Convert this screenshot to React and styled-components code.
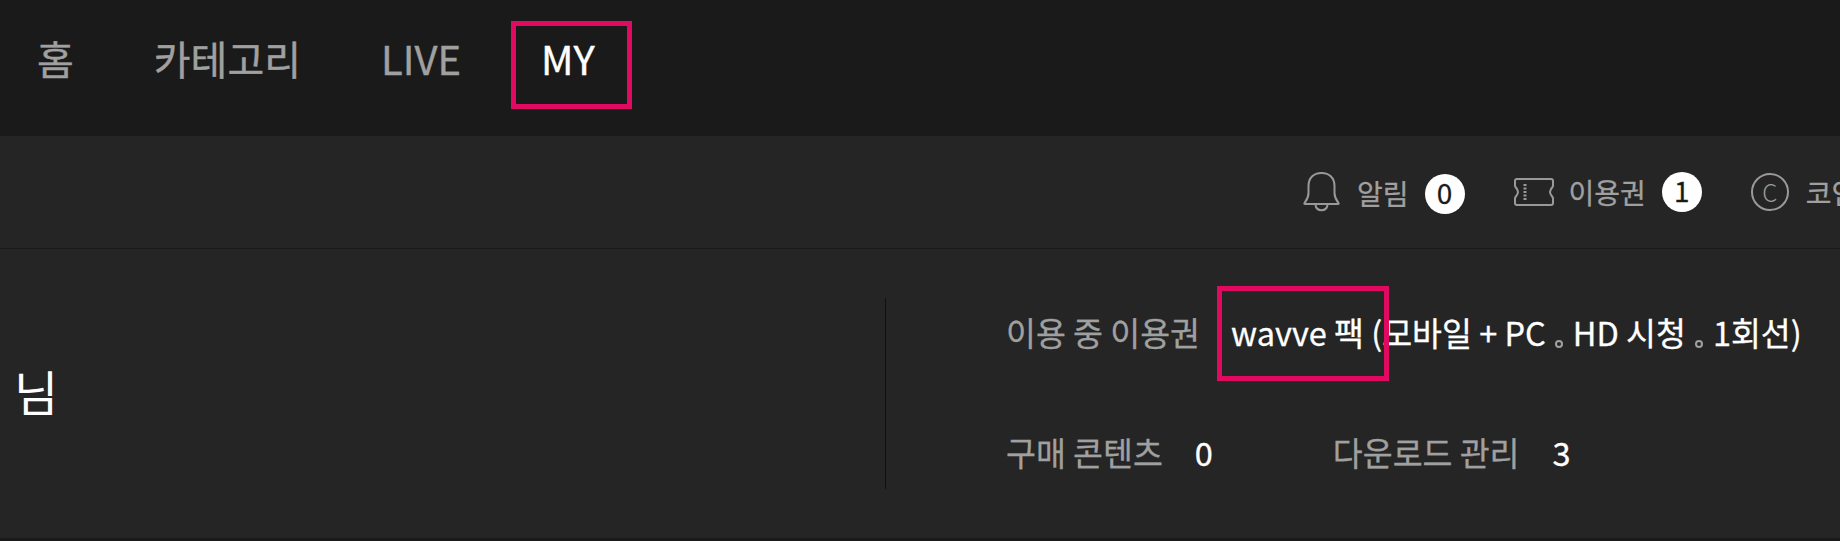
import React from 'react';
import styled, { createGlobalStyle } from 'styled-components';

const Global = createGlobalStyle`
    html, body { margin: 0; padding: 0; background: #252525; }
    body { font-family: "Noto Sans CJK KR", "Noto Sans", sans-serif; overflow: hidden; }
`;

const Page = styled.div`
    width: 1840px;
    height: 541px;
    overflow: hidden;
    display: flex;
    flex-direction: column;
    background: #252525;
`;

const Gnb = styled.nav`
    height: 136px;
    flex: none;
    background: #1a1a1a;
    display: flex;
    align-items: flex-start;
    padding: 26px 0 0 37px;
    box-sizing: border-box;
`;

const GnbItem = styled.a`
    position: relative;
    margin-right: 80px;
    font-size: 40px;
    line-height: 64px;
    -webkit-text-stroke: 0.4px currentColor;
    color: ${(p) => (p.$active ? '#fff' : '#a0a0a0')};
`;

const Highlight = styled.span`
    position: absolute;
    box-sizing: border-box;
    border: 5px solid #e20a60;
    left: ${(p) => p.$left}px;
    top: ${(p) => p.$top}px;
    width: ${(p) => p.$w}px;
    height: ${(p) => p.$h}px;
`;

const Toolbar = styled.div`
    height: 113px;
    flex: none;
    box-sizing: border-box;
    border-bottom: 1px solid #1a1a1a;
    display: flex;
    align-items: center;
    padding: 0 0 0 1303px;
    white-space: nowrap;
`;

const ToolItem = styled.div`
    display: flex;
    align-items: center;
    flex: none;
    margin-right: 49px;
`;

const ToolLabel = styled.span`
    font-size: 28px;
    color: #a0a0a0;
    -webkit-text-stroke: 0.3px currentColor;
    margin: ${(p) => p.$drop || 0}px 16px 0 ${(p) => p.$left}px;
`;

const Count = styled.span`
    width: 40px;
    height: 40px;
    border-radius: 50%;
    background: #fff;
    color: #1a1a1a;
    font-size: 28px;
    line-height: 37px;
    text-align: center;
    -webkit-text-stroke: 0.3px currentColor;
    margin-top: ${(p) => p.$drop || 0}px;
`;

const CoinIcon = styled.span`
    width: 38px;
    height: 38px;
    box-sizing: border-box;
    border: 2px solid #999;
    border-radius: 50%;
    color: #999;
    font-size: 24px;
    line-height: 33px;
    text-align: center;
    font-weight: 300;
`;

const Summary = styled.section`
    flex: 1;
    display: flex;
    align-items: center;
    border-bottom: 3px solid #1a1a1a;
    min-height: 0;
`;

const Greeting = styled.div`
    width: 885px;
    flex: none;
    box-sizing: border-box;
    padding-left: 14px;
    margin-bottom: 8px;
    font-size: 48px;
    color: #fff;
    line-height: 60px;
`;

const Info = styled.div`
    flex: 1;
    height: 191px;
    box-sizing: border-box;
    border-left: 1px solid #111;
    padding-left: 120px;
    white-space: nowrap;
`;

const InfoRow = styled.div`
    display: flex;
    font-size: 32.5px;
    line-height: 44px;
    -webkit-text-stroke: 0.3px currentColor;
    margin-top: ${(p) => p.$top}px;
`;

const InfoLabel = styled.span`
    color: #a0a0a0;
    margin-right: ${(p) => p.$gap}px;
`;

const InfoValue = styled.span`
    position: relative;
    color: #fff;
    margin-right: ${(p) => p.$gap || 0}px;
`;

const Sep = styled.i`
    display: inline-block;
    width: 8px;
    height: 8px;
    box-sizing: border-box;
    border: 2px solid #a0a0a0;
    border-radius: 50%;
    margin: 0 10px 0 9px;
    vertical-align: -2px;
`;

function BellIcon() {
    return (
        <svg width="37" height="40" viewBox="0 0 37 40" fill="none" stroke="#999" strokeWidth="2" strokeLinejoin="round">
            <path d="M1.5 31 C3 29 5.5 26 5.5 21 V14 C5.5 6 10.5 1 18.5 1 C26.5 1 31.5 6 31.5 14 V21 C31.5 26 34 29 35.5 31 Q36 32 35 32 H2 Q1 32 1.5 31 Z" />
            <path d="M12.5 33 C13.5 40 23.5 40 24.5 33" />
        </svg>
    );
}

function TicketIcon() {
    return (
        <svg width="40" height="28" viewBox="0 0 40 28" fill="none" stroke="#999" strokeWidth="2" strokeLinejoin="round">
            <path d="M3 1 H37 Q39 1 39 3 V8 C39 9 36 11 36 14 C36 17 39 19 39 20 V25 Q39 27 37 27 H3 Q1 27 1 25 V20 C1 19 4 17 4 14 C4 11 1 9 1 8 V3 Q1 1 3 1 Z" />
            <path d="M11 6 V23" strokeWidth="3" strokeDasharray="2 1.5" />
        </svg>
    );
}

export default function App() {
    return (
        <Page>
            <Global />
            <Gnb>
                <GnbItem>홈</GnbItem>
                <GnbItem>카테고리</GnbItem>
                <GnbItem>LIVE</GnbItem>
                <GnbItem $active>
                    MY
                    <Highlight $left={-30} $top={-5} $w={121} $h={88} />
                </GnbItem>
            </Gnb>
            <Toolbar>
                <ToolItem>
                    <BellIcon />
                    <ToolLabel $left={17} $drop={2}>알림</ToolLabel>
                    <Count $drop={4}>0</Count>
                </ToolItem>
                <ToolItem>
                    <TicketIcon />
                    <ToolLabel $left={15}>이용권</ToolLabel>
                    <Count>1</Count>
                </ToolItem>
                <ToolItem>
                    <CoinIcon>C</CoinIcon>
                    <ToolLabel $left={17}>코인</ToolLabel>
                </ToolItem>
            </Toolbar>
            <Summary>
                <Greeting>님</Greeting>
                <Info>
                    <InfoRow $top={12}>
                        <InfoLabel $gap={31}>이용 중 이용권</InfoLabel>
                        <InfoValue>
                            wavve 팩 (모바일 + PC<Sep />HD 시청<Sep />1회선)
                            <Highlight $left={-14} $top={-24} $w={172} $h={95} />
                        </InfoValue>
                    </InfoRow>
                    <InfoRow $top={76}>
                        <InfoLabel $gap={32}>구매 콘텐츠</InfoLabel>
                        <InfoValue $gap={120}>0</InfoValue>
                        <InfoLabel $gap={33}>다운로드 관리</InfoLabel>
                        <InfoValue>3</InfoValue>
                    </InfoRow>
                </Info>
            </Summary>
        </Page>
    );
}
